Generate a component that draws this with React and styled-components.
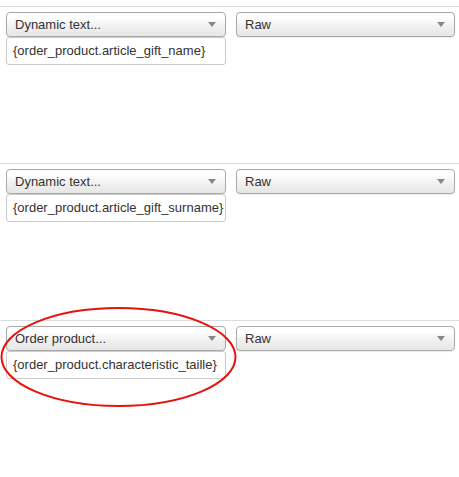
import React from 'react'
import styled, { createGlobalStyle } from 'styled-components'

const Global = createGlobalStyle`
  body {
    margin: 0;
    background: #fff;
    font-family: "Liberation Sans", Arial, sans-serif;
  }
`

const Page = styled.div`
  padding-top: 6px;
  width: 459px;
`

const Section = styled.div`
  position: relative;
  box-sizing: border-box;
  height: 157px;
  border-top: 1px solid #dcdcdc;
  padding: 5px 0 0 6px;
`

const Row = styled.div`
  display: flex;
  gap: 10px;
`

const Column = styled.div`
  display: flex;
  flex-direction: column;
  width: ${p => p.width}px;
`

const Select = styled.div`
  display: flex;
  align-items: center;
  justify-content: space-between;
  height: 23px;
  padding: 0 9px 0 8px;
  border: 1px solid #a9a9a9;
  border-radius: 4px;
  background: linear-gradient(#ffffff 20%, #f0f0f0 60%, #e6e6e6);
  box-shadow: 0 1px 1px rgba(0, 0, 0, 0.08);
  color: #333;
  font-size: 13px;
`

const Arrow = styled.span`
  width: 0;
  height: 0;
  border-left: 4px solid transparent;
  border-right: 4px solid transparent;
  border-top: 5px solid #888;
`

const Input = styled.div`
  height: 26px;
  padding: 0 6px;
  line-height: 26px;
  border: 1px solid #ccc;
  border-radius: 3px;
  color: #333;
  font-size: 13px;
  white-space: nowrap;
`

const Ring = styled.svg`
  position: absolute;
  left: 0;
  top: -16px;
  pointer-events: none;
`

const rows = [
  { source: 'Dynamic text...', value: '{order_product.article_gift_name}' },
  { source: 'Dynamic text...', value: '{order_product.article_gift_surname}' },
  { source: 'Order product...', value: '{order_product.characteristic_taille}', marked: true },
]

export default function App() {
  return (
    <Page>
      <Global />
      {rows.map((row, i) => (
        <Section key={i}>
          <Row>
            <Column width={220}>
              <Select>
                {row.source}
                <Arrow />
              </Select>
              <Input>{row.value}</Input>
            </Column>
            <Column width={219}>
              <Select>
                Raw
                <Arrow />
              </Select>
            </Column>
          </Row>
          {row.marked && (
            <Ring width="240" height="106" viewBox="0 0 240 106">
              <ellipse cx="118.5" cy="52" rx="117" ry="49" fill="none" stroke="#e8120c" strokeWidth="2" />
            </Ring>
          )}
        </Section>
      ))}
    </Page>
  )
}
